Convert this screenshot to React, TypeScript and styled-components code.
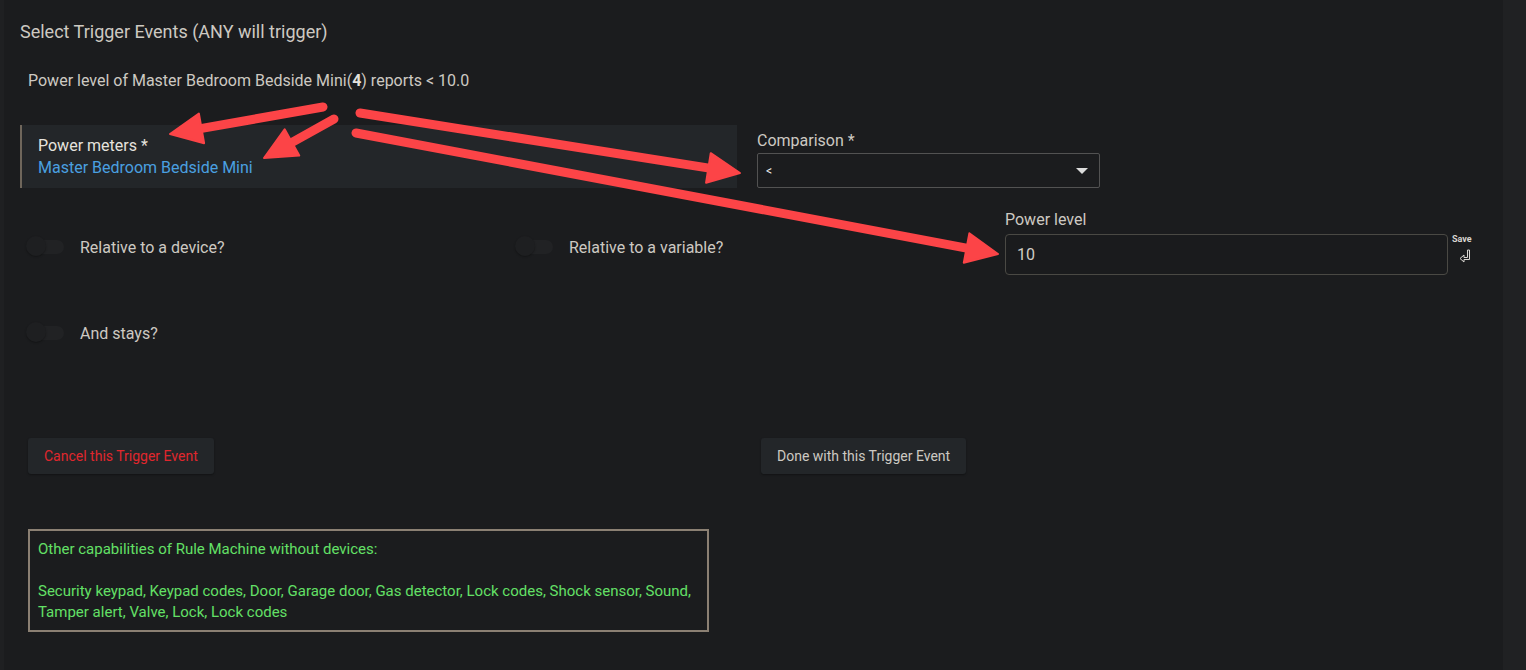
import React from 'react';
import styled, { createGlobalStyle } from 'styled-components';

const GlobalStyle = createGlobalStyle`
  html, body {
    margin: 0;
    padding: 0;
    background: #1b1c1e;
  }
  body {
    font-family: Roboto, 'Noto Sans', Arial, sans-serif;
    color: #c9c5be;
  }
`;

const Page = styled.div`
  position: relative;
  display: flex;
  width: 1526px;
  height: 670px;
  overflow: hidden;
  background: #1b1c1e;
`;

const Gutter = styled.div`
  width: 4px;
  background: #1f2022;
`;

const Main = styled.div`
  flex: 1;
  padding: 22px 0 0 16px;
`;

const SidePanel = styled.div`
  width: 23px;
  background: #202123;
`;

const Title = styled.div`
  font-size: 18px;
  line-height: 20px;
  color: #cdc9c2;
`;

const Summary = styled.div`
  margin: 29px 0 0 8px;
  font-size: 16px;
  line-height: 20px;
  color: #cdc9c2;

  b {
    font-weight: 700;
    color: #e4e1dc;
  }
`;

const FirstRow = styled.div`
  display: flex;
  gap: 20px;
  margin-top: 34px;
`;

const DeviceBox = styled.div`
  width: 717px;
  height: 63px;
  box-sizing: border-box;
  padding: 11px 16px 0;
  background: #232629;
  border-left: 2px solid #6f665b;
`;

const DeviceLabel = styled.div`
  font-size: 16px;
  line-height: 20px;
  color: #e6e3de;
`;

const DeviceValue = styled.div`
  margin-top: 2px;
  font-size: 16px;
  line-height: 20px;
  color: #4aa0e0;
`;

const Field = styled.div`
  display: flex;
  flex-direction: column;
  padding-top: 6px;
`;

const FieldLabel = styled.div`
  font-size: 16px;
  line-height: 19px;
  color: #cdc9c2;
`;

const SelectBox = styled.div`
  margin-top: 3px;
  width: 343px;
  height: 35px;
  box-sizing: border-box;
  border: 1px solid #525252;
  border-radius: 2px;
  display: flex;
  align-items: center;
  justify-content: space-between;
  padding: 0 11px 0 8px;
  font-size: 12px;
  color: #f0f0f0;
`;

const Caret = styled.span`
  width: 0;
  height: 0;
  border-left: 6px solid transparent;
  border-right: 6px solid transparent;
  border-top: 6px solid #dcdcdc;
`;

const Grid = styled.div`
  display: grid;
  grid-template-columns: 489px 488px 489px;
  margin-top: 22px;
`;

const Cell = styled.div<{ $top?: number }>`
  padding: ${(p) => p.$top ?? 0}px 8px 0;
`;

const ToggleRow = styled.label`
  display: flex;
  align-items: center;
  height: 40px;
  gap: 16px;
  font-size: 16px;
  color: #cdc9c2;
`;

const Switch = styled.span`
  position: relative;
  width: 36px;
  height: 14px;
  border-radius: 7px;
  background: #212224;

  &::after {
    content: '';
    position: absolute;
    left: -2px;
    top: -4px;
    width: 20px;
    height: 20px;
    border-radius: 50%;
    background: #1e1f21;
    box-shadow: 0 1px 2px rgba(0, 0, 0, 0.3);
  }
`;

const PowerWrap = styled.div`
  display: flex;
  align-items: flex-start;
  gap: 4px;
`;

const InputBox = styled.div`
  margin-top: 5px;
  width: 443px;
  height: 41px;
  box-sizing: border-box;
  border: 1px solid #4a4944;
  border-radius: 4px;
  background: #1a1b1d;
  display: flex;
  align-items: center;
  padding-left: 11px;
  font-size: 16px;
  color: #d0ccc5;
`;

const SaveCol = styled.div`
  margin-top: 24px;
  display: flex;
  flex-direction: column;
  align-items: center;
  gap: 5px;
  font-size: 9px;
  font-weight: 700;
  color: #d8d5d0;

  svg {
    margin-left: 6px;
  }
`;

const StaysRow = styled.div`
  padding: 38px 0 0 8px;
`;

const ButtonRow = styled.div`
  display: grid;
  grid-template-columns: 733px auto;
  margin-top: 85px;
  padding-left: 8px;
`;

const Button = styled.button<{ $danger?: boolean }>`
  justify-self: start;
  height: 36px;
  padding: 0 16px;
  border: none;
  border-radius: 3px;
  background: #232629;
  box-shadow: 0 1px 2px rgba(0, 0, 0, 0.35);
  font-family: Roboto, sans-serif;
  font-size: 14px;
  color: ${(p) => (p.$danger ? '#e0262d' : '#cdc9c2')};
`;

const InfoBox = styled.div`
  margin: 55px 0 0 8px;
  width: 681px;
  height: 103px;
  box-sizing: border-box;
  border: 2px solid #8b8073;
  padding: 8px 8px;
  font-size: 15px;
  line-height: 21px;
  color: #63e066;
`;

const Overlay = styled.svg`
  position: absolute;
  left: 0;
  top: 0;
  pointer-events: none;
`;

type Arrow = { x1: number; y1: number; x2: number; y2: number };

const arrows: Arrow[] = [
  { x1: 323, y1: 107, x2: 170, y2: 134 },
  { x1: 334, y1: 119, x2: 264, y2: 158 },
  { x1: 360, y1: 113, x2: 740, y2: 173 },
  { x1: 356, y1: 133, x2: 998, y2: 254 },
];

const ArrowShape: React.FC<Arrow> = ({ x1, y1, x2, y2 }) => {
  const dx = x2 - x1;
  const dy = y2 - y1;
  const len = Math.hypot(dx, dy);
  const ux = dx / len;
  const uy = dy / len;
  const headLen = 32;
  const headHalf = 15;
  const bx = x2 - ux * headLen;
  const by = y2 - uy * headLen;
  const px = -uy;
  const py = ux;
  const head = `${x2},${y2} ${bx + px * headHalf},${by + py * headHalf} ${bx - px * headHalf},${by - py * headHalf}`;
  return (
    <g>
      <line
        x1={x1}
        y1={y1}
        x2={bx + ux * 4}
        y2={by + uy * 4}
        stroke="#fc4447"
        strokeWidth={9}
        strokeLinecap="round"
      />
      <polygon points={head} fill="#fc4447" stroke="#fc4447" strokeWidth={2} strokeLinejoin="round" />
    </g>
  );
};

export default function App() {
  return (
    <>
      <GlobalStyle />
      <Page>
        <Gutter />
        <Main>
          <Title>Select Trigger Events (ANY will trigger)</Title>
          <Summary>
            Power level of Master Bedroom Bedside Mini(<b>4</b>) reports &lt; 10.0
          </Summary>

          <FirstRow>
            <DeviceBox>
              <DeviceLabel>Power meters *</DeviceLabel>
              <DeviceValue>Master Bedroom Bedside Mini</DeviceValue>
            </DeviceBox>
            <Field>
              <FieldLabel>Comparison *</FieldLabel>
              <SelectBox>
                <span>&lt;</span>
                <Caret />
              </SelectBox>
            </Field>
          </FirstRow>

          <Grid>
            <Cell $top={17}>
              <ToggleRow>
                <Switch />
                Relative to a device?
              </ToggleRow>
            </Cell>
            <Cell $top={17}>
              <ToggleRow>
                <Switch />
                Relative to a variable?
              </ToggleRow>
            </Cell>
            <Cell>
              <PowerWrap>
                <div>
                  <FieldLabel>Power level</FieldLabel>
                  <InputBox>10</InputBox>
                </div>
                <SaveCol>
                  Save
                  <svg width="12" height="14" viewBox="0 0 12 14">
                    <polygon
                      points="10.5,1 10.5,10.5 5,10.5 5,13 1,9.5 5,6 5,8.5 8.5,8.5 8.5,1"
                      fill="none"
                      stroke="#d8d5d0"
                      strokeWidth="1"
                      strokeLinejoin="miter"
                    />
                  </svg>
                </SaveCol>
              </PowerWrap>
            </Cell>
          </Grid>

          <StaysRow>
            <ToggleRow>
              <Switch />
              And stays?
            </ToggleRow>
          </StaysRow>

          <ButtonRow>
            <Button $danger>Cancel this Trigger Event</Button>
            <Button>Done with this Trigger Event</Button>
          </ButtonRow>

          <InfoBox>
            Other capabilities of Rule Machine without devices:
            <br />
            <br />
            Security keypad, Keypad codes, Door, Garage door, Gas detector, Lock codes, Shock sensor, Sound,
            Tamper alert, Valve, Lock, Lock codes
          </InfoBox>
        </Main>
        <SidePanel />
        <Overlay width={1526} height={670}>
          {arrows.map((a, i) => (
            <ArrowShape key={i} {...a} />
          ))}
        </Overlay>
      </Page>
    </>
  );
}
